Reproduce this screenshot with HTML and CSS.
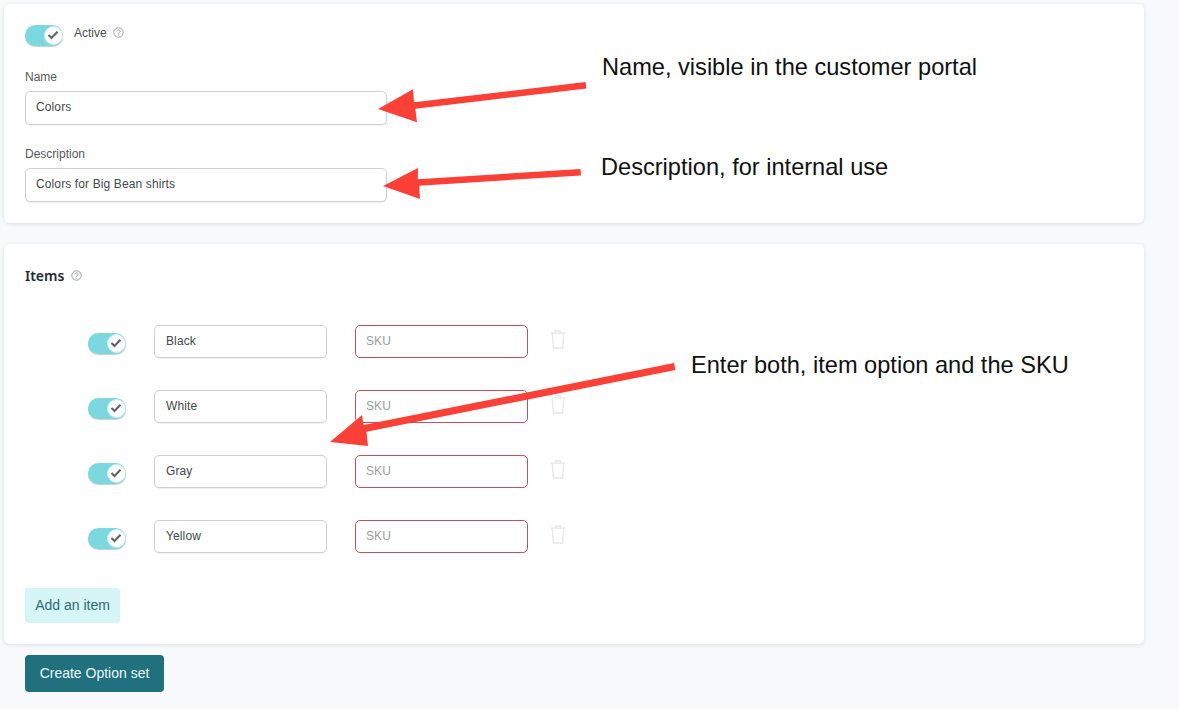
FILE: index.html
```html
<!DOCTYPE html>
<html lang="en">
<head>
<meta charset="utf-8">
<title>Create Option set</title>
<link rel="stylesheet" href="styles.css">
</head>
<body>
<svg width="0" height="0" class="defs">
  <symbol id="check" viewBox="0 0 12 12"><path d="M1.500 6 4.500 9 10.500 2.800" fill="none" stroke="#5f6368" stroke-width="2.100"/></symbol>
  <symbol id="help" viewBox="0 0 11 11"><circle cx="5.500" cy="5.500" r="4.700" fill="none" stroke="#8f9699" stroke-width=".9"/><path d="M3.900 4.300c.1-2 3.300-1.900 3.300 0 0 1.200-1.600 1.200-1.700 2.400" fill="none" stroke="#8f9699" stroke-width=".9"/><circle cx="5.500" cy="8.100" r=".5" fill="#8f9699"/></symbol>
  <symbol id="trash" viewBox="0 0 16 19"><path d="M.8 3.200h14.400M5.400 3V1h5.200v2M2.200 3.400 3.400 18h9.200l1.200-14.600" fill="none" stroke="#e6e8ea" stroke-width="1.300"/></symbol>
</svg>
<main class="page">
  <section class="card card-top">
    <div class="active-row">
      <span class="toggle"><span class="knob"><svg class="check"><use href="#check"/></svg></span></span>
      <span class="active-label">Active</span>
      <svg class="help"><use href="#help"/></svg>
    </div>
    <label class="field">
      <span class="field-label">Name</span>
      <input class="input input-wide" value="Colors">
    </label>
    <label class="field field-last">
      <span class="field-label">Description</span>
      <input class="input input-wide" value="Colors for Big Bean shirts">
    </label>
  </section>

  <section class="card card-items">
    <h2 class="items-title">Items <svg class="help"><use href="#help"/></svg></h2>
    <div class="items">
      <div class="item">
        <span class="toggle"><span class="knob"><svg class="check"><use href="#check"/></svg></span></span>
        <input class="input input-item" value="Black">
        <input class="input input-item input-error" placeholder="SKU">
        <svg class="trash"><use href="#trash"/></svg>
      </div>
      <div class="item">
        <span class="toggle"><span class="knob"><svg class="check"><use href="#check"/></svg></span></span>
        <input class="input input-item" value="White">
        <input class="input input-item input-error" placeholder="SKU">
        <svg class="trash"><use href="#trash"/></svg>
      </div>
      <div class="item">
        <span class="toggle"><span class="knob"><svg class="check"><use href="#check"/></svg></span></span>
        <input class="input input-item" value="Gray">
        <input class="input input-item input-error" placeholder="SKU">
        <svg class="trash"><use href="#trash"/></svg>
      </div>
      <div class="item">
        <span class="toggle"><span class="knob"><svg class="check"><use href="#check"/></svg></span></span>
        <input class="input input-item" value="Yellow">
        <input class="input input-item input-error" placeholder="SKU">
        <svg class="trash"><use href="#trash"/></svg>
      </div>
    </div>
    <button class="btn-add" type="button">Add an item</button>
  </section>

  <button class="btn-create" type="button">Create Option set</button>
</main>

<svg class="arrows" width="1179" height="709" viewBox="0 0 1179 709">
  <g fill="#fb4137" stroke="none">
    <path d="M585.600 82 414 102.200l-1-12.900L378 109l39 13.200-1.700-13.500 171.100-20.200z"/>
    <path d="M580.500 169 417.800 179.200l.2-11.200L383 186l37 13-.8-13.300 161.800-10.200z"/>
    <path d="M674 363 363.500 425 362 415l-32 27 38 4-1.500-14.200L675.500 370z"/>
  </g>
</svg>
<p class="note note-name">Name, visible in the customer portal</p>
<p class="note note-desc">Description, for internal use</p>
<p class="note note-items">Enter both, item option and the SKU</p>
</body>
</html>
```
FILE: styles.css
```css
* { box-sizing: border-box; }
html, body { height: 100%; }
body {
  margin: 0;
  background: #f8f9fb;
  font-family: "Liberation Sans", Arial, sans-serif;
  color: #3c4043;
  position: relative;
  overflow: hidden;
}
.defs { position: absolute; }
.page {
  width: 1144px;
  padding: 4px 0 0 4px;
  display: flex;
  flex-direction: column;
  align-items: flex-start;
}
.card {
  width: 1140px;
  background: #fff;
  border-radius: 6px;
  padding: 0 21px;
  box-shadow: 0 1px 4px rgba(40, 50, 70, .13);
}
.card-top { height: 219px; padding-top: 21px; margin-bottom: 21px; }
.card-items { height: 400px; padding-top: 22px; margin-bottom: 11px; }

.active-row { display: flex; align-items: flex-start; height: 21px; margin-bottom: 24px; }
.active-label { font-size: 12px; line-height: 14px; margin: 1px 6px 0 11px; color: #4a4e52; }
.help { width: 11px; height: 11px; margin-top: 2px; }

.toggle {
  position: relative;
  display: block;
  flex: none;
  width: 38px;
  height: 21px;
  border-radius: 11px;
  background: #7bd8df;
  box-shadow: 0 1px 1px rgba(60, 90, 90, .3);
}
.knob {
  position: absolute;
  right: 0;
  top: 1px;
  width: 19px;
  height: 19px;
  border-radius: 50%;
  background: #fff;
  border: 1px solid #cfeef0;
  display: flex;
  align-items: center;
  justify-content: center;
}
.check { width: 12px; height: 12px; margin: -1px 1px 0 0; }

.field { display: block; margin-bottom: 22px; }
.field-last { margin-bottom: 0; }
.field-label {
  display: block;
  font-size: 12px;
  line-height: 14px;
  margin-bottom: 7px;
  color: #55595c;
}
.input {
  display: block;
  height: 34px;
  padding: 0 10px 2px;
  background: #fff;
  border: 1px solid #cfd0d2;
  border-radius: 5px;
  font: 12px "Liberation Sans", Arial, sans-serif;
  letter-spacing: .12px;
  color: #45494c;
  outline: none;
  box-shadow: 0 1px 1px rgba(0, 0, 0, .06);
}
.input::placeholder { color: #9a9ca2; opacity: 1; }
.input-wide { width: 362px; }
.input-item { width: 173px; height: 33px; flex: none; padding-left: 11px; }
.input-error { border-color: #c4505c; box-shadow: none; margin-left: 28px; padding-left: 10px; }

.items-title {
  display: flex;
  align-items: center;
  gap: 7px;
  margin: 0;
  height: 18px;
  font: 600 14px "Noto Sans", sans-serif;
  color: #1d2b30;
}
.items-title .help { margin-top: 0; }
.items {
  margin: 41px 0 0 63px;
  display: flex;
  flex-direction: column;
  gap: 32px;
}
.item { display: flex; align-items: flex-start; height: 33px; }
.item .toggle { margin-top: 8px; margin-right: 28px; }
.trash { width: 16px; height: 19px; margin: 5px 0 0 22px; flex: none; }

.btn-add {
  display: block;
  margin-top: 35px;
  width: 95px;
  height: 35px;
  padding: 0 0 2px;
  border: 0;
  border-radius: 3px;
  background: #d5f5f6;
  color: #2d6d76;
  font: 14px "Liberation Sans", Arial, sans-serif;
}
.btn-create {
  display: block;
  margin-left: 21px;
  width: 139px;
  height: 37px;
  padding: 0 0 2px;
  border: 0;
  border-radius: 4px;
  background: #21707d;
  color: #e9f8f9;
  font: 14px "Liberation Sans", Arial, sans-serif;
}

.arrows { position: absolute; left: 0; top: 0; pointer-events: none; }
.note {
  position: absolute;
  margin: 0;
  font-size: 23.6px;
  line-height: 28px;
  color: #111;
  white-space: nowrap;
}
.note-name { left: 602px; top: 53px; }
.note-desc { left: 601px; top: 153px; }
.note-items { left: 691px; top: 351px; }
```
